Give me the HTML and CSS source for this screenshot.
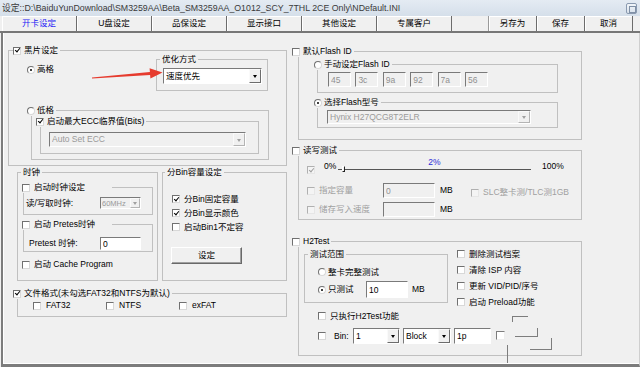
FILE: index.html
```html
<!DOCTYPE html>
<html lang="zh-CN">
<head>
    <meta charset="UTF-8">
    <meta name="viewport" content="width=device-width, initial-scale=1.0">
    <title>设定</title>
    <link rel="stylesheet" href="styles.css">
</head>
<body>
    <div class="window">
        <div class="titlebar">
            <span class="title">设定::D:\BaiduYunDownload\SM3259AA\Beta_SM3259AA_O1012_SCY_7THL 2CE Only\NDefault.INI</span>
            <span class="close"></span>
        </div>

        <div class="tabbar">
            <div class="tab active">开卡设定</div>
            <div class="tab">U盘设定</div>
            <div class="tab">品保设定</div>
            <div class="tab">显示接口</div>
            <div class="tab">其他设定</div>
            <div class="tab">专属客户</div>
            <div class="actions">
                <button>另存为</button>
                <button>保存</button>
                <button>取消</button>
            </div>
        </div>

        <div class="panel">
            <div class="col-left">
                <div class="group g-chip">
                    <label class="legend"><input type="checkbox" checked>黑片设定</label>
                    <div class="high-row">
                        <label class="opt radio"><input type="radio" name="fmt" checked>高格</label>
                        <div class="group g-opt">
                            <span class="legend">优化方式</span>
                            <div class="combo w-speed"><span>速度优先</span><i class="drop"></i></div>
                        </div>
                    </div>
                    <div class="group g-low">
                        <label class="legend radio"><input type="radio" name="fmt">低格</label>
                        <div class="group g-ecc">
                            <label class="legend"><input type="checkbox" checked>启动最大ECC临界值(Bits)</label>
                            <div class="combo disabled w-ecc"><span>Auto Set ECC</span><i class="drop"></i></div>
                        </div>
                    </div>
                    <svg class="arrow" width="78" height="18" viewBox="88 64 78 18">
                        <polygon points="92,77.6 149.9,71.9 149.6,68.2 162.5,72.6 150.4,78.6 150.1,74.9 92,78.6" fill="#e63b2e"/>
                    </svg>
                </div>

                <div class="mid-row">
                    <div class="group g-clock">
                        <span class="legend">时钟</span>
                        <div class="group sub">
                            <label class="legend wide"><input type="checkbox">启动时钟设定</label>
                            <div class="field-row">
                                <span>读/写取时钟:</span>
                                <div class="combo disabled w-clk small"><span>60MHz</span><i class="drop"></i></div>
                            </div>
                        </div>
                        <div class="group sub">
                            <label class="legend wide"><input type="checkbox">启动 Pretes时钟</label>
                            <div class="field-row pre">
                                <span>Pretest 时钟:</span>
                                <input class="edit w-clk" value="0">
                            </div>
                        </div>
                        <label class="opt cache"><input type="checkbox">启动 Cache Program</label>
                    </div>

                    <div class="group g-bin">
                        <span class="legend">分Bin容量设定</span>
                        <div class="bin-list">
                            <label class="opt"><input type="checkbox" checked>分Bin固定容量</label>
                            <label class="opt"><input type="checkbox" checked>分Bin显示颜色</label>
                            <label class="opt"><input type="checkbox">启动Bin1不定容</label>
                        </div>
                        <button class="btn set">设定</button>
                    </div>
                </div>

                <div class="group g-fs">
                    <label class="legend"><input type="checkbox" checked>文件格式(未勾选FAT32和NTFS为默认)</label>
                    <div class="fs-row">
                        <label class="opt"><input type="checkbox">FAT32</label>
                        <label class="opt"><input type="checkbox">NTFS</label>
                        <label class="opt"><input type="checkbox">exFAT</label>
                    </div>
                </div>
            </div>

            <div class="col-right">
                <div class="group g-flash">
                    <label class="legend"><input type="checkbox">默认Flash ID</label>
                    <div class="group sub-a">
                        <label class="legend radio"><input type="radio" name="fid">手动设定Flash ID</label>
                        <div class="ids">
                            <input class="edit" value="45" disabled>
                            <input class="edit" value="3c" disabled>
                            <input class="edit" value="9a" disabled>
                            <input class="edit" value="92" disabled>
                            <input class="edit" value="7a" disabled>
                            <input class="edit" value="56" disabled>
                        </div>
                    </div>
                    <div class="group sub-b">
                        <label class="legend radio"><input type="radio" name="fid" checked>选择Flash型号</label>
                        <div class="combo disabled w-model"><span>Hynix H27QCG8T2ELR</span><i class="drop"></i></div>
                    </div>
                </div>

                <div class="group g-rw">
                    <label class="legend"><input type="checkbox">读写测试</label>
                    <div class="slider-row">
                        <input type="checkbox" checked disabled>
                        <span class="pct">0%</span>
                        <div class="slider">
                            <span class="val">2%</span>
                            <div class="track"><i class="thumb"></i></div>
                        </div>
                        <span class="pct max">100%</span>
                    </div>
                    <div class="size-row">
                        <label class="opt off"><input type="checkbox" disabled>指定容量</label>
                        <input class="edit" value="0" disabled>
                        <span class="unit">MB</span>
                        <label class="opt off slc"><input type="checkbox" disabled>SLC整卡测/TLC测1GB</label>
                    </div>
                    <div class="size-row">
                        <label class="opt off"><input type="checkbox" disabled>储存写入速度</label>
                        <input class="edit" disabled>
                        <span class="unit">MB</span>
                    </div>
                </div>

                <div class="group g-h2">
                    <label class="legend"><input type="checkbox">H2Test</label>
                    <div class="h2-top">
                        <div class="group g-range">
                            <span class="legend">测试范围</span>
                            <label class="opt radio"><input type="radio" name="rng">整卡完整测试</label>
                            <div class="range-row">
                                <label class="opt radio"><input type="radio" name="rng" checked>只测试</label>
                                <input class="edit" value="10">
                                <span>MB</span>
                            </div>
                        </div>
                        <div class="h2-opts">
                            <label class="opt"><input type="checkbox">删除测试档案</label>
                            <label class="opt"><input type="checkbox">清除 ISP 内容</label>
                            <label class="opt"><input type="checkbox">更新 VID/PID/序号</label>
                            <label class="opt"><input type="checkbox">启动 Preload功能</label>
                        </div>
                    </div>
                    <label class="opt only"><input type="checkbox">只执行H2Test功能</label>
                    <div class="bin-row">
                        <input type="checkbox">
                        <span class="bin-lbl">Bin:</span>
                        <div class="combo w-b1"><span>1</span><i class="drop"></i></div>
                        <div class="combo w-blk"><span>Block</span><i class="drop"></i></div>
                        <input class="edit w-1p" value="1p">
                    </div>
                    <!-- leftover redraw fragments from the original capture -->
                    <i class="glitch gl1"></i>
                    <i class="glitch gl2"></i>
                    <i class="glitch gl3"></i>
                    <i class="glitch gl4"></i>
                    <i class="glitch gl5"></i>
                </div>
            </div>
        </div>
    </div>
</body>
</html>
```

FILE: styles.css
```css
* {
    box-sizing: border-box;
}

body {
    margin: 0;
    background: #f0f0f0;
    font-family: "Liberation Sans", "Noto Sans CJK SC", sans-serif;
    font-size: 8.5px;
    line-height: 11px;
    color: #000;
}

.window {
    width: 640px;
    height: 367px;
    display: flex;
    flex-direction: column;
    overflow: hidden;
}

/* Title bar */
.titlebar {
    height: 16px;
    flex: none;
    display: flex;
    align-items: center;
    justify-content: space-between;
    padding: 0 3px 0 2px;
    background: linear-gradient(#e4ebf3, #d5dfea);
    color: #3a3a3a;
    font-size: 8.8px;
}

.title {
    white-space: nowrap;
}

.close {
    position: relative;
    width: 11px;
    height: 11px;
    border: 1px solid #8a9ab0;
    border-radius: 2px;
    background: linear-gradient(#f2f6fa, #d8e1eb);
}

.close::after {
    content: "";
    position: absolute;
    left: 2px;
    top: 2px;
    width: 5px;
    height: 5px;
    border: 1px solid #8090a6;
}

/* Tabs */
.tabbar {
    height: 17px;
    flex: none;
    display: flex;
    padding-left: 2px;
    border-bottom: 2px solid #777;
}

.tab {
    width: 75px;
    display: flex;
    align-items: center;
    justify-content: center;
    border-right: 1px solid #6c6c6c;
    box-shadow: inset 1px 1px 0 #fff;
}

.tab.active {
    color: #2323f5;
}

.actions {
    display: flex;
    margin-left: 36px;
    border-left: 1px solid #9a9a9a;
}

.actions button {
    font: inherit;
    color: #000;
    width: 48px;
    padding: 0;
    border: 0;
    border-right: 1px solid #6c6c6c;
    background: #f0f0f0;
    box-shadow: inset 1px 1px 0 #fff;
}

/* Main panel */
.panel {
    flex: 1;
    display: flex;
    margin-left: 1px;
    border-left: 2px solid #7c7c7c;
    border-bottom: 3px solid #7c7c7c;
    border-right: 1px solid #cfcfcf;
    box-shadow: inset 1px -1px 0 #fff;
}

.col-left {
    width: 279px;
    margin-left: 5px;
    padding-top: 17px;
}

.col-right {
    width: 284px;
    margin-left: 11px;
    padding-top: 18px;
}

/* Group boxes */
.group {
    position: relative;
    border: 1px solid #c0c0c0;
}

.legend {
    display: flex;
    align-items: center;
    gap: 3px;
    width: max-content;
    height: 11px;
    margin-top: -6px;
    padding-right: 2px;
    background: #f0f0f0;
    white-space: nowrap;
}

span.legend {
    padding: 0 2px;
}

.legend.radio,
.opt.radio {
    gap: 2px;
}

.opt {
    display: flex;
    align-items: center;
    gap: 4px;
    height: 11px;
    white-space: nowrap;
}

.off {
    color: #a0a0a0;
}

/* Controls */
input[type="checkbox"],
input[type="radio"] {
    -webkit-appearance: none;
    appearance: none;
    position: relative;
    flex: none;
    width: 8px;
    height: 8px;
    margin: 0;
    background: #fff;
    border: 1px solid;
    border-color: #707070 #d8d8d8 #d8d8d8 #707070;
}

input[type="radio"] {
    border-radius: 50%;
}

input[type="checkbox"]:checked::after {
    content: "";
    position: absolute;
    left: 1.5px;
    top: -0.5px;
    width: 2px;
    height: 4px;
    border: solid #000;
    border-width: 0 1.6px 1.6px 0;
    transform: rotate(40deg);
}

input[type="radio"]:checked::after {
    content: "";
    position: absolute;
    left: 2px;
    top: 2px;
    width: 2px;
    height: 2px;
    border-radius: 50%;
    background: #000;
}

input[type="checkbox"]:disabled {
    background: #f4f4f4;
    border-color: #b0b0b0 #e6e6e6 #e6e6e6 #b0b0b0;
}

input[type="checkbox"]:disabled:checked::after {
    border-color: #a0a0a0;
}

.edit {
    font: inherit;
    color: #000;
    height: 15px;
    margin: 0;
    padding: 0 2px;
    background: #fff;
    border: 1px solid;
    border-color: #7a7a7a #fff #fff #7a7a7a;
    outline: none;
}

.edit:disabled {
    background: #f0f0f0;
    color: #909090;
}

.combo {
    display: flex;
    align-items: center;
    padding-left: 2px;
    background: #fff;
    border: 1px solid;
    border-color: #7a7a7a #fff #fff #7a7a7a;
}

.combo > span {
    flex: 1;
    overflow: hidden;
    white-space: nowrap;
}

.combo.small {
    padding-left: 1px;
    font-size: 7.5px;
}

.combo .drop {
    position: relative;
    align-self: stretch;
    width: 12px;
    background: #f0f0f0;
    border: 1px solid;
    border-color: #fafafa #6c6c6c #6c6c6c #fafafa;
}

.combo.small .drop {
    width: 10px;
}

.combo .drop::after {
    content: "";
    position: absolute;
    left: 50%;
    top: 50%;
    margin: -1px 0 0 -2.5px;
    border-style: solid;
    border-width: 3px 2.5px 0;
    border-color: #000 transparent transparent;
}

.combo.disabled {
    background: #f0f0f0;
    color: #9a9a9a;
}

.combo.disabled .drop {
    border-color: #fafafa #b4b4b4 #b4b4b4 #fafafa;
}

.combo.disabled .drop::after {
    border-top-color: #a0a0a0;
}

.btn {
    font: inherit;
    color: #000;
    padding: 0;
    background: #f0f0f0;
    border: 1px solid;
    border-color: #fff #696969 #696969 #fff;
    box-shadow: inset -1px -1px 0 #a0a0a0;
}

/* 黑片设定 */
.g-chip {
    height: 116px;
}

.g-chip > .legend {
    margin-left: 4px;
}

.high-row {
    display: flex;
    margin-top: 3px;
}

.high-row > .opt {
    margin: 5px 0 0 18px;
}

.g-opt {
    width: 112px;
    height: 32px;
    margin-left: auto;
    margin-right: 18px;
}

.g-opt > .legend {
    margin-left: 3px;
}

.w-speed {
    width: 99px;
    height: 16px;
    margin: 3px 0 0 6px;
}

.g-low {
    width: 238px;
    height: 50px;
    margin: 19px 0 0 22px;
}

.g-low > .legend {
    margin-left: -5px;
}

.g-ecc {
    width: 219px;
    height: 33px;
    margin: 5px 0 0 8px;
}

.g-ecc > .legend {
    margin-left: -5px;
}

.w-ecc {
    width: 197px;
    height: 15px;
    margin: 5px 0 0 8px;
}

.arrow {
    position: absolute;
    left: 79px;
    top: 13px;
}

/* 时钟 / 分Bin */
.mid-row {
    display: flex;
    gap: 4px;
    margin: 6px 0 0 9px;
}

.g-clock {
    width: 141px;
    height: 109px;
}

.g-clock > .legend {
    margin-left: 3px;
}

.sub {
    width: 130px;
    height: 28px;
    margin: 9px 0 0 5px;
}

.sub > .legend {
    margin-left: -2px;
    width: 90px;
    gap: 4px;
}

.field-row {
    display: flex;
    align-items: center;
    height: 12px;
    margin-top: 4px;
    padding: 0 11px 0 2px;
}

.field-row > .w-clk {
    margin-left: auto;
}

.field-row.pre {
    height: 13px;
    margin-top: 7px;
    padding-left: 5px;
}

.w-clk {
    width: 41px;
    height: 12px;
}

.field-row.pre .w-clk {
    height: 13px;
}

.cache {
    margin: 7px 0 0 4px;
}

.g-bin {
    width: 125px;
    height: 109px;
}

.g-bin > .legend {
    margin-left: 2px;
}

.bin-list {
    margin: 14px 0 0 9px;
}

.bin-list > .opt {
    height: 14px;
}

.set {
    display: block;
    width: 71px;
    height: 17px;
    margin: 13px 0 0 8px;
}

/* 文件格式 */
.g-fs {
    width: 270px;
    height: 24px;
    margin: 12px 0 0 9px;
}

.g-fs > .legend {
    margin-left: -5px;
}

.fs-row {
    display: flex;
    margin: 1px 0 0 15px;
}

.fs-row > .opt {
    width: 73px;
    gap: 5px;
}

/* Right column */
.col-right > .group > .legend {
    margin-left: -7px;
}

.g-flash {
    height: 89px;
}

.sub-a,
.sub-b {
    width: 241px;
    margin-left: 18px;
}

.sub-a > .legend,
.sub-b > .legend {
    margin-left: -4px;
}

.sub-a {
    height: 29px;
    margin-top: 7px;
}

.ids {
    display: flex;
    gap: 4.4px;
    margin: 2px 0 0 10px;
}

.ids .edit {
    width: 23px;
}

.sub-b {
    height: 26px;
    margin-top: 9px;
}

.w-model {
    width: 204px;
    height: 14px;
    margin: 2px 0 0 9px;
}

/* 读写测试 */
.g-rw {
    height: 70px;
    margin-top: 10px;
}

.slider-row {
    display: flex;
    height: 18px;
}

.slider-row > input {
    margin: 10px 0 0 8px;
}

.pct {
    width: 14px;
    margin: 5px 0 0 9px;
}

.pct.max {
    width: auto;
    margin-left: 11px;
}

.slider {
    width: 193px;
}

.slider .val {
    display: block;
    height: 12px;
    line-height: 12px;
    text-align: center;
    color: #2b2bd8;
}

.track {
    position: relative;
    height: 1px;
    margin-top: 1px;
    background: #555;
}

.thumb {
    position: absolute;
    left: 4px;
    top: -3px;
    width: 3px;
    height: 6px;
    background: #f0f0f0;
    border: 1px solid;
    border-color: #fff #222 #222 #fff;
}

.size-row {
    display: flex;
    height: 15px;
    margin-top: 4px;
}

.slider-row + .size-row {
    margin-top: 9px;
}

.size-row > .opt {
    width: 76px;
    margin-left: 8px;
    align-self: center;
}

.size-row > .edit {
    width: 52px;
}

.unit {
    width: 31px;
    margin-left: 5px;
    align-self: center;
}

.size-row > .slc {
    width: auto;
    margin: 4px 0 0;
    align-self: flex-start;
}

/* H2Test */
.g-h2 {
    height: 115px;
    margin-top: 21px;
}

.h2-top {
    display: flex;
}

.g-range {
    width: 144px;
    height: 49px;
    margin: 7px 0 0 5px;
}

.g-range > .legend {
    margin-left: 3px;
}

.g-range > .opt {
    height: 12px;
    margin: 6px 0 0 13px;
}

.range-row {
    display: flex;
    align-items: center;
    height: 17px;
    margin: 3px 0 0 13px;
}

.range-row > .opt {
    width: 48px;
}

.range-row > .edit {
    width: 42px;
    height: 17px;
}

.range-row > span {
    margin-left: 4px;
}

.h2-opts {
    margin: -1px 0 0 9px;
}

.h2-opts > .opt {
    height: 16px;
}

.only {
    height: 12px;
    margin-left: 19px;
}

.bin-row {
    display: flex;
    align-items: center;
    height: 16px;
    margin: 6px 0 0 19px;
}

.bin-lbl {
    width: 19px;
    margin-left: 8px;
}

.w-b1 {
    width: 47px;
    height: 16px;
}

.w-blk {
    width: 48px;
    height: 16px;
    margin-left: 3px;
}

.w-1p {
    width: 37px;
    height: 16px;
    margin-left: 3px;
}

.glitch {
    position: absolute;
    border: 0 solid #7d7d7d;
}

.gl1 {
    left: 197px;
    top: 89px;
    width: 9px;
    height: 9px;
    border-width: 1px;
    border-color: #7d7d7d #eee #eee #7d7d7d;
    background: #fff;
}

.gl2 {
    left: 213px;
    top: 74px;
    width: 16px;
    height: 6px;
    border-top-width: 1px;
    border-left-width: 1px;
}

.gl3 {
    left: 216px;
    top: 86px;
    width: 23px;
    height: 9px;
    border-bottom-width: 1px;
    border-right-width: 1px;
}

.gl4 {
    left: 231px;
    top: 96px;
    width: 22px;
    height: 12px;
    border-bottom-width: 1px;
    border-right-width: 1px;
}

.gl5 {
    left: 208px;
    top: 103px;
    width: 1px;
    height: 18px;
    border-left-width: 1px;
}
```
